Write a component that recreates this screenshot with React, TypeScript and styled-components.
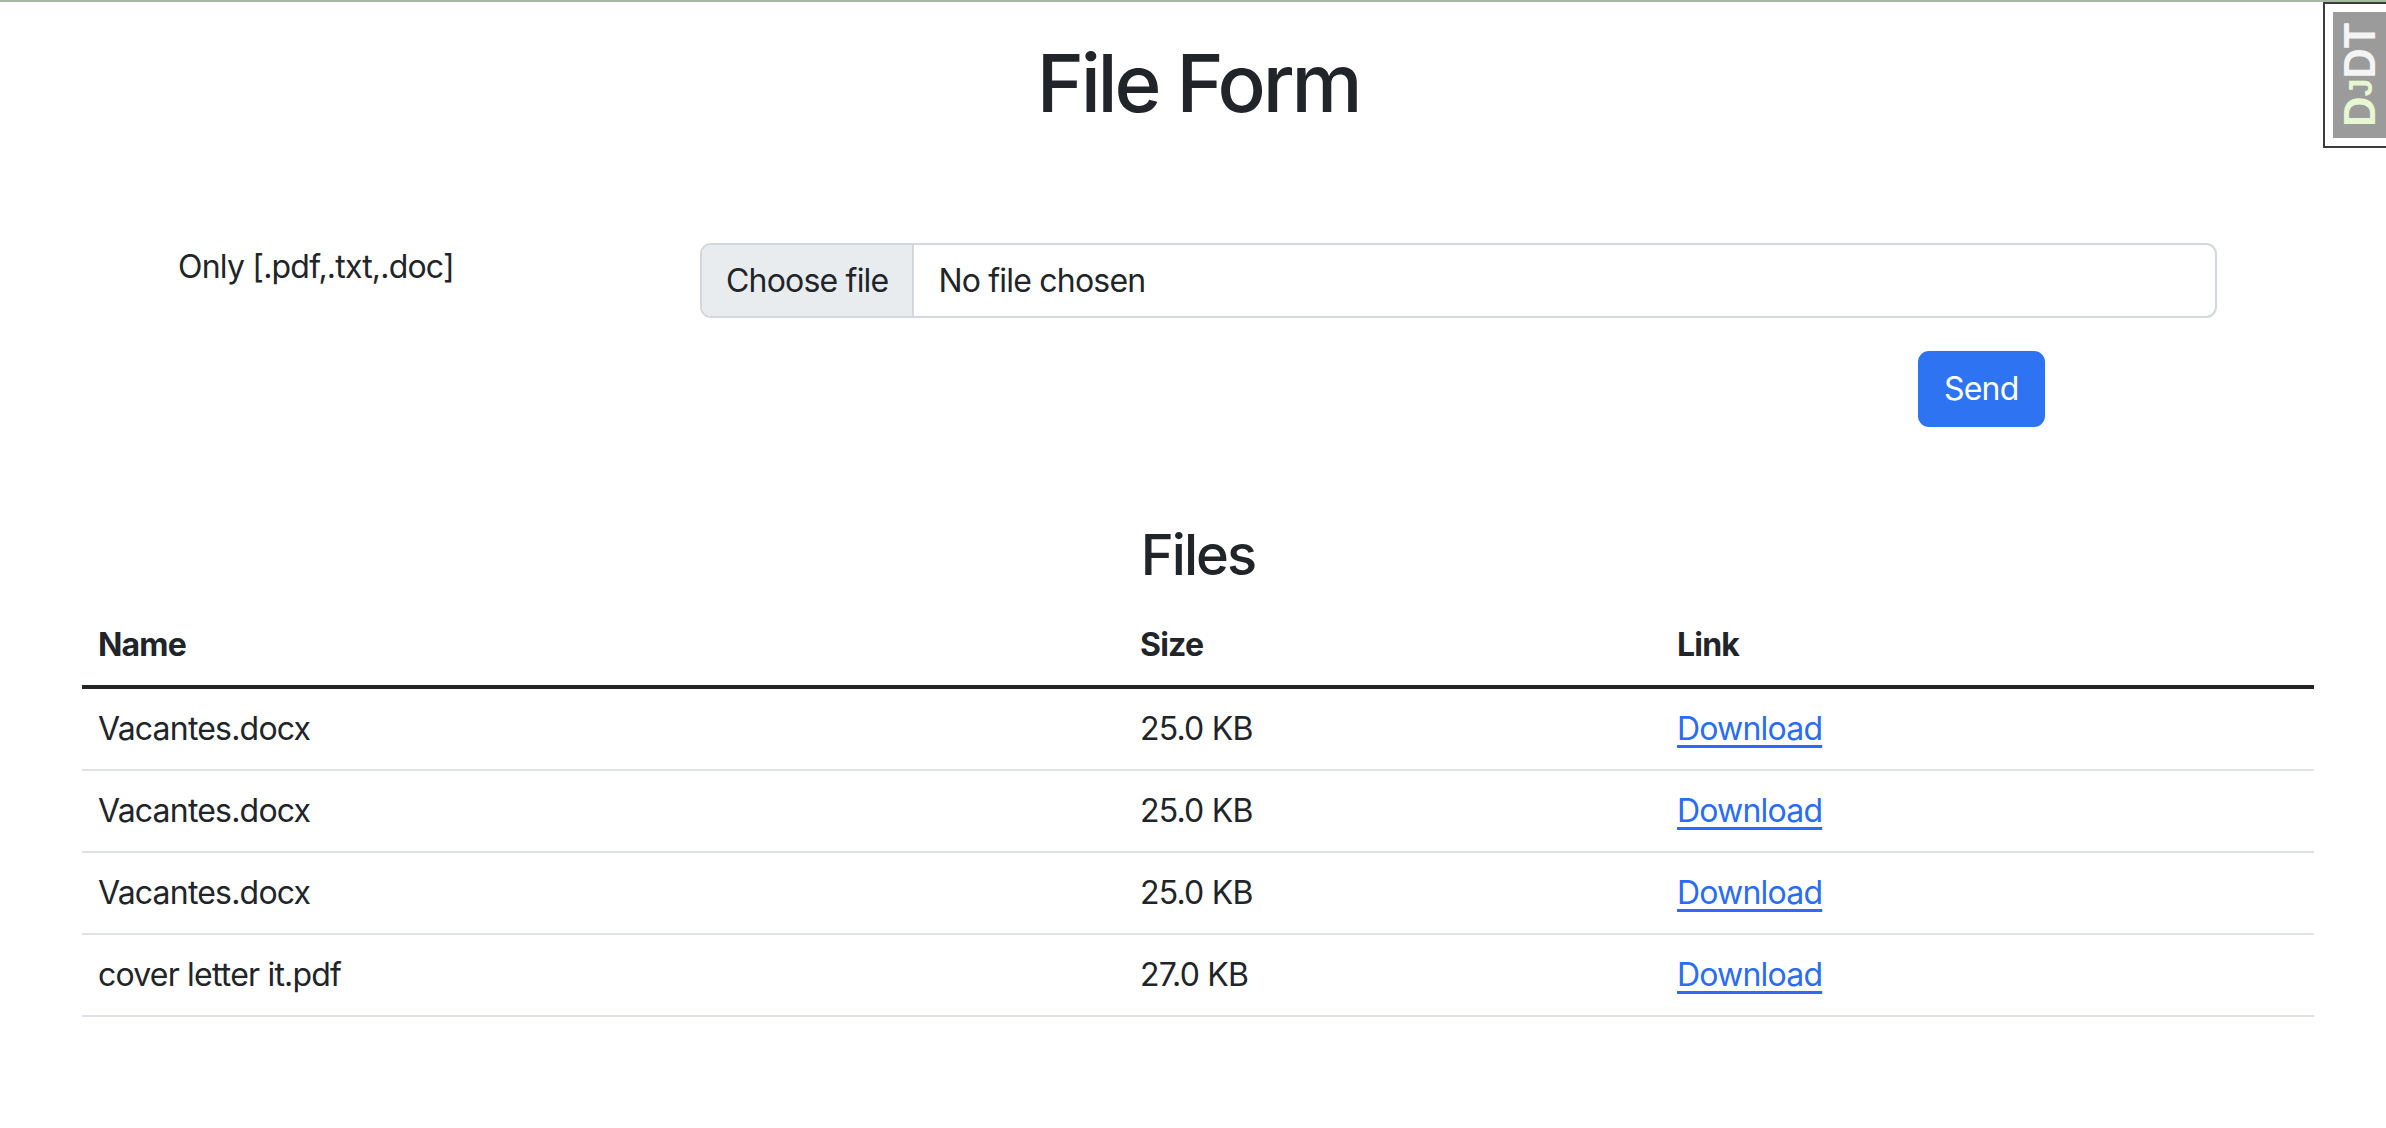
import React from "react";
import styled, { createGlobalStyle } from "styled-components";

interface FileRow {
  name: string;
  size: string;
}

const files: FileRow[] = [
  { name: "Vacantes.docx", size: "25.0 KB" },
  { name: "Vacantes.docx", size: "25.0 KB" },
  { name: "Vacantes.docx", size: "25.0 KB" },
  { name: "cover letter it.pdf", size: "27.0 KB" },
];

const App: React.FC = () => {
  return (
    <>
      <GlobalStyle />
      <TopLine />
      <Page>
        <Title>File Form</Title>
        <UploadForm onSubmit={(e) => e.preventDefault()}>
          <FieldRow>
            <FieldLabel>Only [.pdf,.txt,.doc]</FieldLabel>
            <FileInput>
              <FileButton>Choose file</FileButton>
              <FileName>No file chosen</FileName>
            </FileInput>
          </FieldRow>
          <ActionRow>
            <SendButton type="submit">Send</SendButton>
          </ActionRow>
        </UploadForm>

        <SectionTitle>Files</SectionTitle>
        <FilesTable>
          <colgroup>
            <col style={{ width: 1042 }} />
            <col style={{ width: 537 }} />
            <col />
          </colgroup>
          <thead>
            <tr>
              <HeadCell>Name</HeadCell>
              <HeadCell>Size</HeadCell>
              <HeadCell>Link</HeadCell>
            </tr>
          </thead>
          <tbody>
            {files.map((file, idx) => (
              <tr key={idx}>
                <Cell>{file.name}</Cell>
                <Cell>{file.size}</Cell>
                <Cell>
                  <DownloadLink href="#">Download</DownloadLink>
                </Cell>
              </tr>
            ))}
          </tbody>
        </FilesTable>
      </Page>

      {/* debug toolbar handle, fixed over the page corner */}
      <DebugHandle>
        <DebugButton>
          <DebugText>
            <DebugLetter $accent>D</DebugLetter>
            <DebugLetter $accent $small>
              J
            </DebugLetter>
            <DebugLetter>D</DebugLetter>
            <DebugLetter>T</DebugLetter>
          </DebugText>
        </DebugButton>
      </DebugHandle>
    </>
  );
};

const GlobalStyle = createGlobalStyle`
  html, body {
    margin: 0;
    padding: 0;
    background: #fff;
  }
  body {
    font-family: Inter, "Noto Sans", "Liberation Sans", sans-serif;
    font-size: 32px;
    line-height: 1.5;
    letter-spacing: -0.8px;
    color: #212529;
  }
  * {
    box-sizing: border-box;
  }
`;

const TopLine = styled.div`
  height: 2px;
  background: #a4b8a2;
`;

const Page = styled.div`
  width: 2232px;
  margin-left: 82px;
`;

const Title = styled.h1`
  margin: 33px 0 0;
  font-size: 80px;
  font-weight: 500;
  line-height: 1.2;
  letter-spacing: -3.2px;
  text-align: center;
`;

const UploadForm = styled.form`
  margin: 0;
`;

const FieldRow = styled.div`
  display: flex;
  align-items: flex-start;
  margin-top: 112px;
`;

const FieldLabel = styled.label`
  width: 618px;
  padding-left: 96px;
  line-height: 48px;
`;

const FileInput = styled.div`
  display: flex;
  align-items: stretch;
  width: 1517px;
  height: 75px;
  border: 2px solid #d3d8dd;
  border-radius: 11px;
  overflow: hidden;
  background: #fff;
`;

const FileButton = styled.span`
  display: flex;
  align-items: center;
  padding: 0 24px;
  background: #e9ecef;
  border-right: 2px solid #d3d8dd;
  white-space: nowrap;
`;

const FileName = styled.span`
  display: flex;
  align-items: center;
  padding-left: 24px;
  white-space: nowrap;
`;

const ActionRow = styled.div`
  display: flex;
  margin-top: 33px;
  padding-left: 1836px;
`;

const SendButton = styled.button`
  height: 76px;
  padding: 0 24px;
  border: 2px solid #2e73f2;
  border-radius: 11px;
  background: #2e73f2;
  color: #fff;
  font-family: inherit;
  font-size: 32px;
  line-height: 48px;
  letter-spacing: -0.8px;
  cursor: pointer;
`;

const SectionTitle = styled.h3`
  margin: 95px 0 16px;
  font-size: 56px;
  font-weight: 500;
  line-height: 1.2;
  letter-spacing: -2px;
  text-align: center;
`;

const FilesTable = styled.table`
  width: 100%;
  border-collapse: collapse;
  table-layout: fixed;
`;

const HeadCell = styled.th`
  padding: 16px;
  text-align: left;
  font-weight: 700;
  line-height: 48px;
  border-bottom: 4px solid #212529;
`;

const Cell = styled.td`
  padding: 16px;
  line-height: 48px;
  border-bottom: 2px solid #dee2e6;
`;

const DownloadLink = styled.a`
  color: #2a6cf3;
  text-decoration: underline;
  text-decoration-thickness: 3px;
  text-underline-offset: 5px;
`;

const DebugHandle = styled.div`
  position: fixed;
  top: 2px;
  right: 0;
  width: 63px;
  height: 146px;
  padding: 8px 0 8px 8px;
  background: #fff;
  border: 2px solid #3c3c3c;
  border-right: none;
`;

const DebugButton = styled.div`
  display: flex;
  align-items: center;
  justify-content: center;
  height: 100%;
  background: #9b9b9b;
`;

const DebugText = styled.span`
  writing-mode: vertical-rl;
  transform: rotate(180deg) scale(1, 0.95);
  font-family: "Liberation Sans", Arial, sans-serif;
  font-weight: 700;
  line-height: 1;
  letter-spacing: 0;
  white-space: nowrap;
`;

const DebugLetter = styled.span<{ $accent?: boolean; $small?: boolean }>`
  font-size: ${(p) => (p.$small ? "34px" : "44px")};
  color: ${(p) => (p.$accent ? "#e6f7d2" : "#f4f4f4")};
`;

export default App;
